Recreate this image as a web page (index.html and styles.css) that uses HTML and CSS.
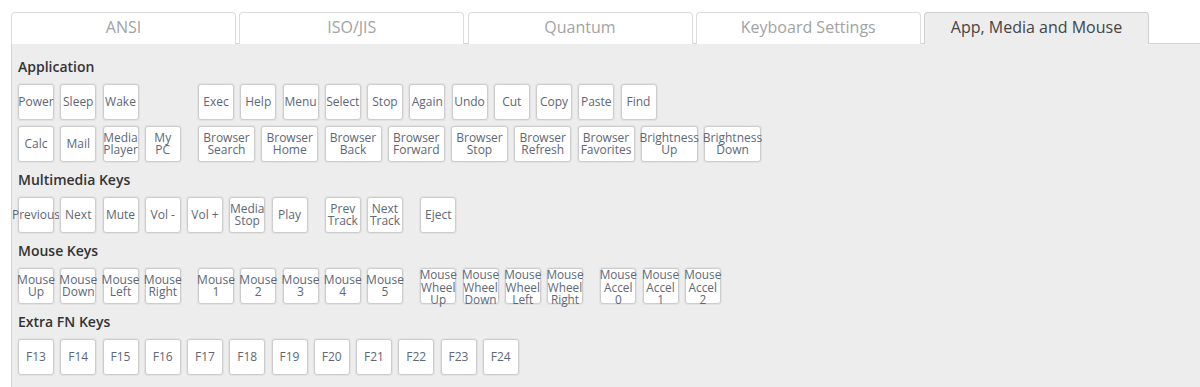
FILE: index.html
```html
<!DOCTYPE html>
<html lang="en">
    <head>
        <meta charset="UTF-8">
        <title>Keymap - App, Media and Mouse</title>
        <link rel="stylesheet" href="styles.css">
    </head>
    <body>

        <!-- tab bar -->
        <nav class="tabs">
            <a class="tab">ANSI</a>
            <a class="tab">ISO/JIS</a>
            <a class="tab">Quantum</a>
            <a class="tab">Keyboard Settings</a>
            <a class="tab active">App, Media and Mouse</a>
        </nav>

        <div class="panel">

            <!-- application keys -->
            <h4>Application</h4>
            <div class="row">
                <div class="key">Power</div>
                <div class="key">Sleep</div>
                <div class="key">Wake</div>
                <div class="key skip">Exec</div>
                <div class="key">Help</div>
                <div class="key">Menu</div>
                <div class="key">Select</div>
                <div class="key">Stop</div>
                <div class="key">Again</div>
                <div class="key">Undo</div>
                <div class="key">Cut</div>
                <div class="key">Copy</div>
                <div class="key">Paste</div>
                <div class="key">Find</div>
            </div>
            <div class="row">
                <div class="key">Calc</div>
                <div class="key">Mail</div>
                <div class="key">Media<br>Player</div>
                <div class="key">My<br>PC</div>
                <div class="key wide sep">Browser<br>Search</div>
                <div class="key wide">Browser<br>Home</div>
                <div class="key wide">Browser<br>Back</div>
                <div class="key wide">Browser<br>Forward</div>
                <div class="key wide">Browser<br>Stop</div>
                <div class="key wide">Browser<br>Refresh</div>
                <div class="key wide">Browser<br>Favorites</div>
                <div class="key wide">Brightness<br>Up</div>
                <div class="key wide">Brightness<br>Down</div>
            </div>

            <!-- multimedia keys -->
            <h4>Multimedia Keys</h4>
            <div class="row">
                <div class="key">Previous</div>
                <div class="key">Next</div>
                <div class="key">Mute</div>
                <div class="key">Vol -</div>
                <div class="key">Vol +</div>
                <div class="key">Media<br>Stop</div>
                <div class="key">Play</div>
                <div class="key sep">Prev<br>Track</div>
                <div class="key">Next<br>Track</div>
                <div class="key sep">Eject</div>
            </div>

            <!-- mouse keys -->
            <h4>Mouse Keys</h4>
            <div class="row">
                <div class="key">Mouse<br>Up</div>
                <div class="key">Mouse<br>Down</div>
                <div class="key">Mouse<br>Left</div>
                <div class="key">Mouse<br>Right</div>
                <div class="key sep">Mouse<br>1</div>
                <div class="key">Mouse<br>2</div>
                <div class="key">Mouse<br>3</div>
                <div class="key">Mouse<br>4</div>
                <div class="key">Mouse<br>5</div>
                <div class="key small sep">Mouse<br>Wheel<br>Up</div>
                <div class="key small">Mouse<br>Wheel<br>Down</div>
                <div class="key small">Mouse<br>Wheel<br>Left</div>
                <div class="key small">Mouse<br>Wheel<br>Right</div>
                <div class="key small sep">Mouse<br>Accel<br>0</div>
                <div class="key small">Mouse<br>Accel<br>1</div>
                <div class="key small">Mouse<br>Accel<br>2</div>
            </div>

            <!-- extra fn keys -->
            <h4>Extra FN Keys</h4>
            <div class="row">
                <div class="key">F13</div>
                <div class="key">F14</div>
                <div class="key">F15</div>
                <div class="key">F16</div>
                <div class="key">F17</div>
                <div class="key">F18</div>
                <div class="key">F19</div>
                <div class="key">F20</div>
                <div class="key">F21</div>
                <div class="key">F22</div>
                <div class="key">F23</div>
                <div class="key">F24</div>
            </div>

        </div>

    </body>
</html>
```

FILE: styles.css
```css
html,
body {
    overflow: hidden;
}

body {
    font-family: 'Open Sans', 'Noto Sans', sans-serif;
    margin: 0;
    padding: 0;
    background-color: #fff;
}

.tabs {
    display: flex;
    gap: 3.25px;
    padding: 12px 0 0 11px;
    position: relative;
    z-index: 1;
}

.tab {
    box-sizing: border-box;
    width: 225px;
    height: 32px;
    margin-bottom: -1px;
    border: 1px solid #dcdcdc;
    border-bottom: none;
    border-radius: 4px 4px 0 0;
    background-color: #fff;
    color: #a3a3a3;
    font-size: 16px;
    line-height: 28px;
    text-align: center;
}

.tab.active {
    background-color: #ededed;
    border-color: #cfcfcf;
    color: #444;
}

.panel {
    margin: 0 -20px 0 11px;
    padding: 11px 0 11px 6px;
    background-color: #ededed;
    border: 1px solid #d4d4d4;
}

h4 {
    margin: 0;
    font-size: 14px;
    font-weight: 600;
    line-height: 23px;
    color: #333;
}

.row {
    display: flex;
    gap: 6.25px;
    margin: 6px 0;
}

.key {
    box-sizing: border-box;
    flex: none;
    width: 36px;
    height: 36px;
    display: flex;
    align-items: center;
    justify-content: center;
    text-align: center;
    white-space: nowrap;
    background-color: #fff;
    border: 1px solid #cdcdcd;
    box-shadow: 0 0 0 1px #e2e2e2;
    border-radius: 3px;
    color: #5d6776;
    font-size: 12px;
    line-height: 12.4px;
}

.key.wide {
    width: 57px;
}

.key.small {
    font-size: 11.8px;
    line-height: 12.5px;
    padding-top: 2px;
}

.key.sep {
    margin-left: 11px;
}

.key.skip {
    margin-left: 53.25px;
}
```
